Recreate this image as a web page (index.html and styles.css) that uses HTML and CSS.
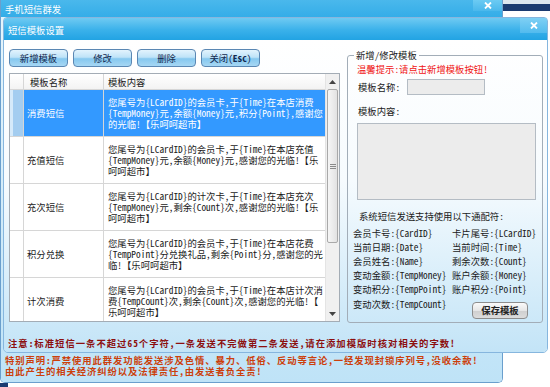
FILE: index.html
```html
<!DOCTYPE html>
<html lang="zh-CN">
<head>
<meta charset="utf-8">
<title>短信模板设置</title>
<link rel="stylesheet" href="styles.css">
</head>
<body>
<div class="desktop">
  <div class="bg-piece bg-top-light"></div>
  <div class="bg-piece bg-top-navy"></div>
  <div class="bg-piece bg-bottom-navy"></div>

  <div class="win main-win">
    <div class="titlebar main-title">
      <span class="title-text">手机短信群发</span>
      <span class="close-btn main-close"><svg width="8" height="7" viewBox="0 0 8 7"><path d="M1 0.5L7 6.5M7 0.5L1 6.5" stroke="#fff" stroke-width="1.8" fill="none"/></svg></span>
    </div>
    <div class="main-body">
      <p class="statement">特别声明:严禁使用此群发功能发送涉及色情、暴力、低俗、反动等言论,一经发现封锁序列号,没收余款!<br>由此产生的相关经济纠纷以及法律责任,由发送者负全责!</p>
    </div>
  </div>

  <div class="win dialog">
    <div class="titlebar dlg-title">
      <span class="title-text">短信模板设置</span>
      <span class="close-btn dlg-close"><svg width="8" height="7" viewBox="0 0 8 7"><path d="M1 0.5L7 6.5M7 0.5L1 6.5" stroke="#fff" stroke-width="1.8" fill="none"/></svg></span>
    </div>
    <div class="dlg-body">
      <div class="columns">
        <div class="left-col">
          <div class="toolbar">
            <button class="tbtn">新增模板</button>
            <button class="tbtn">修改</button>
            <button class="tbtn">删除</button>
            <button class="tbtn">关闭(<b>Esc</b>)</button>
          </div>
          <div class="grid">
            <div class="grid-main">
              <div class="row head">
                <div class="cell ind"></div>
                <div class="cell name">模板名称</div>
                <div class="cell content">模板内容</div>
              </div>
              <div class="row selected">
                <div class="cell ind"></div>
                <div class="cell name">消费短信</div>
                <div class="cell content">您尾号为{LCardID}的会员卡,于{Time}在本店消费<br>{TempMoney}元,余额{Money}元,积分{Point},感谢您<br>的光临!【乐呵呵超市】</div>
              </div>
              <div class="row">
                <div class="cell ind"></div>
                <div class="cell name">充值短信</div>
                <div class="cell content">您尾号为{LCardID}的会员卡,于{Time}在本店充值<br>{TempMoney}元,余额{Money}元,感谢您的光临!【乐<br>呵呵超市】</div>
              </div>
              <div class="row">
                <div class="cell ind"></div>
                <div class="cell name">充次短信</div>
                <div class="cell content">您尾号为{LCardID}的计次卡,于{Time}在本店充次<br>{TempMoney}元,剩余{Count}次,感谢您的光临!【乐<br>呵呵超市】</div>
              </div>
              <div class="row">
                <div class="cell ind"></div>
                <div class="cell name">积分兑换</div>
                <div class="cell content">您尾号为{LCardID}的会员卡,于{Time}在本店花费<br>{TempPoint}分兑换礼品,剩余{Point}分,感谢您的光<br>临!【乐呵呵超市】</div>
              </div>
              <div class="row">
                <div class="cell ind"></div>
                <div class="cell name">计次消费</div>
                <div class="cell content">您尾号为{LCardID}的会员卡,于{Time}在本店计次消<br>费{TempCount}次,剩余{Count}次,感谢您的光临!【<br>乐呵呵超市】</div>
              </div>
            </div>
            <div class="scrollbar">
              <div class="sb-arrow"><svg width="7" height="4" viewBox="0 0 7 4"><path d="M0 4L3.5 0L7 4Z" fill="#444"/></svg></div>
              <div class="sb-track">
                <div class="sb-thumb"><span class="grip"></span></div>
              </div>
              <div class="sb-arrow"><svg width="7" height="4" viewBox="0 0 7 4"><path d="M0 0L3.5 4L7 0Z" fill="#444"/></svg></div>
            </div>
          </div>
        </div>

        <fieldset class="editor">
          <legend>新增/修改模板</legend>
          <p class="hint">温馨提示:请点击新增模板按钮!</p>
          <div class="name-row">
            <span class="lbl">模板名称:</span>
            <input class="name-input" type="text">
          </div>
          <p class="content-lbl">模板内容:</p>
          <textarea class="content-area"></textarea>
          <p class="wild-title">系统短信发送支持使用以下通配符:</p>
          <div class="wild">
            <span>会员卡号:{CardID}</span><span>卡片尾号:{LCardID}</span>
            <span>当前日期:{Date}</span><span>当前时间:{Time}</span>
            <span>会员姓名:{Name}</span><span>剩余次数:{Count}</span>
            <span>变动金额:{TempMoney}</span><span>账户余额:{Money}</span>
            <span>变动积分:{TempPoint}</span><span>账户积分:{Point}</span>
          </div>
          <div class="last-row">
            <span class="wild-last">变动次数:{TempCount}</span>
            <button class="save-btn">保存模板</button>
          </div>
        </fieldset>
      </div>
      <p class="notice">注意:标准短信一条不超过65个字符,一条发送不完做第二条发送,请在添加模版时核对相关的字数!</p>
    </div>
  </div>
</div>
</body>
</html>
```

FILE: styles.css
```css
* { box-sizing: border-box; }
html, body { margin: 0; padding: 0; }
body {
  background: #ffffff;
  font-family: "Noto Sans Mono CJK SC", "Noto Sans CJK SC", sans-serif;
  font-size: 9.35px;
  color: #1a1a1a;
}
p { margin: 0; }
button, input, textarea { font-family: inherit; font-size: inherit; }

.desktop {
  position: relative;
  width: 550px;
  height: 387px;
  overflow: hidden;
  background: #ffffff;
}
.bg-piece { position: absolute; }
.bg-top-light { left: 503px; top: 0; width: 47px; height: 4px; background: #dde6ef; }
.bg-top-navy { left: 503px; top: 4px; width: 47px; height: 7px; background: #1b3a70; }
.bg-bottom-navy { left: 0; top: 383px; width: 8px; height: 4px; background: #1b3a70; }

.win {
  position: absolute;
  display: flex;
  flex-direction: column;
  overflow: hidden;
}
.titlebar {
  flex: none;
  display: flex;
  align-items: flex-start;
  color: #ffffff;
}
.close-btn {
  margin-left: auto;
  display: flex;
  align-items: center;
  justify-content: center;
}

/* main window */
.main-win {
  left: 0;
  top: 0;
  width: 503px;
  height: 383px;
  border: 1px solid #6a9fcd;
  border-top: 0;
  border-radius: 0 0 5px 5px;
}
.main-title {
  height: 17px;
  padding-left: 4px;
  background: linear-gradient(#4ab8ec, #34ade8);
}
.main-title .title-text { line-height: 18px; }
.main-close {
  width: 29px;
  height: 11px;
  background: linear-gradient(#6ccbf3, #4ab8ec);
}
.main-body {
  flex: 1;
  display: flex;
  flex-direction: column;
  justify-content: flex-end;
  padding: 0 0 5px 4px;
  background: linear-gradient(#e6f5fc, #bfe3f7);
}
.statement {
  font-weight: 700;
  line-height: 11px;
  letter-spacing: 0.9px;
  color: #cc3f0b;
  white-space: nowrap;
}

/* dialog */
.dialog {
  left: 3px;
  top: 17px;
  width: 545px;
  height: 336px;
  border: 1px solid #86b6de;
  border-radius: 4px 4px 5px 5px;
}
.dlg-title {
  height: 22px;
  padding-left: 4px;
  background: linear-gradient(#6fcaf2, #3ab1ea 55%, #22a3e3);
}
.dlg-title .title-text { line-height: 25px; }
.dlg-close {
  width: 27px;
  height: 15px;
  background: linear-gradient(#7fd0f4, #52bbee);
}
.dlg-body {
  flex: 1;
  padding: 9px 4px 0 5px;
  background: linear-gradient(#ffffff 0%, #f6fbfe 45%, #c3e4f7 100%);
}
.columns {
  display: flex;
  gap: 7px;
  align-items: flex-start;
}
.left-col {
  width: 331px;
  flex: none;
}

/* toolbar */
.toolbar {
  display: flex;
  gap: 5px;
  margin-bottom: 6px;
}
.tbtn {
  width: 59px;
  height: 18px;
  padding: 0;
  border: 1px solid #5a87b3;
  border-radius: 4px;
  color: #13294f;
  line-height: 16px;
  background: linear-gradient(#e2f3fd 0%, #bfe3f8 45%, #86c8ef 55%, #a6d7f4 100%);
}
.tbtn b { font-weight: 700; }

/* data grid */
.grid {
  display: flex;
  height: 249px;
  border: 1px solid #a3acb5;
  background: #ffffff;
}
.grid-main {
  flex: 1;
  overflow: hidden;
}
.row {
  display: grid;
  grid-template-columns: 14px 80px 1fr;
  height: 47px;
  border-bottom: 1px solid #d6d6d6;
}
.row.head {
  height: 16px;
  background: linear-gradient(#ffffff, #f3f3f3);
}
.cell {
  display: flex;
  align-items: center;
  border-right: 1px solid #d6d6d6;
  white-space: nowrap;
  overflow: hidden;
}
.cell.content { border-right: 0; padding-left: 4px; line-height: 11px; }
.cell.name { padding-left: 3px; }
.head .cell.name { padding-left: 6px; }
.head .cell { line-height: 12px; }
.selected .cell.name,
.selected .cell.content {
  background: #3399ff;
  color: #ffffff;
}
.selected .cell.ind {
  background: linear-gradient(90deg, #d6eafa 0 3px, #a4cdf0 3px);
}

/* scrollbar */
.scrollbar {
  width: 14px;
  flex: none;
  display: flex;
  flex-direction: column;
  background: #f0f0f0;
  border-left: 1px solid #e4e4e4;
}
.sb-arrow {
  height: 15px;
  flex: none;
  display: flex;
  align-items: center;
  justify-content: center;
}
.sb-track {
  flex: 1;
}
.sb-thumb {
  margin: 0 1px;
  height: 154px;
  border: 1px solid #a9a9a9;
  border-radius: 2px;
  background: linear-gradient(90deg, #f6f6f6, #e2e2e2);
  display: flex;
  align-items: center;
  justify-content: center;
}
.grip {
  width: 6px;
  height: 5px;
  border-top: 1px solid #8a8a8a;
  border-bottom: 1px solid #8a8a8a;
  background: linear-gradient(#8a8a8a, #8a8a8a) center / 6px 1px no-repeat;
}

/* editor fieldset */
.editor {
  flex: 1;
  min-width: 0;
  height: 274px;
  margin: 0;
  padding: 0 6px 0 9px;
  border: 1px solid #a2adb8;
  border-radius: 3px;
}
.editor legend {
  margin-left: -3px;
  padding: 0 2px;
  line-height: 12px;
  color: #1a1a1a;
}
.hint {
  margin-top: 2px;
  line-height: 12px;
  color: #f01414;
}
.name-row {
  display: flex;
  align-items: center;
  height: 16px;
  margin-top: 4px;
}
.lbl {
  width: 50px;
  padding-left: 1px;
  flex: none;
}
.name-input {
  width: 78px;
  height: 16px;
  border: 1px solid #b4bcc4;
  background: #ececec;
  padding: 0;
}
.content-lbl {
  margin-top: 10px;
  line-height: 12px;
  padding-left: 1px;
}
.content-area {
  display: block;
  width: 179px;
  height: 77px;
  margin-top: 6px;
  border: 1px solid #b4bcc4;
  background: #ececec;
  resize: none;
  padding: 0;
}
.wild-title {
  margin-top: 10px;
  padding-left: 2px;
  line-height: 12px;
}
.wild {
  display: grid;
  grid-template-columns: 99px auto;
  margin: 4px 0 0 -4px;
  line-height: 14px;
  white-space: nowrap;
}
.last-row {
  display: flex;
  justify-content: space-between;
  align-items: flex-start;
  margin-left: -4px;
  padding-right: 8px;
  line-height: 14px;
}
.wild-last { margin-top: 1px; }
.save-btn {
  margin-top: 6px;
  width: 56px;
  height: 17px;
  padding: 0;
  border: 1px solid #8d8d8d;
  border-radius: 4px;
  font-weight: 700;
  color: #222;
  line-height: 15px;
  background: linear-gradient(#fafafa 0%, #e6e6e6 50%, #cfcfcf 52%, #dcdcdc 100%);
}

.notice {
  margin: 14px 0 0 -1px;
  line-height: 12px;
  font-weight: 700;
  letter-spacing: 1px;
  color: #8c0f0f;
  white-space: nowrap;
}
```
